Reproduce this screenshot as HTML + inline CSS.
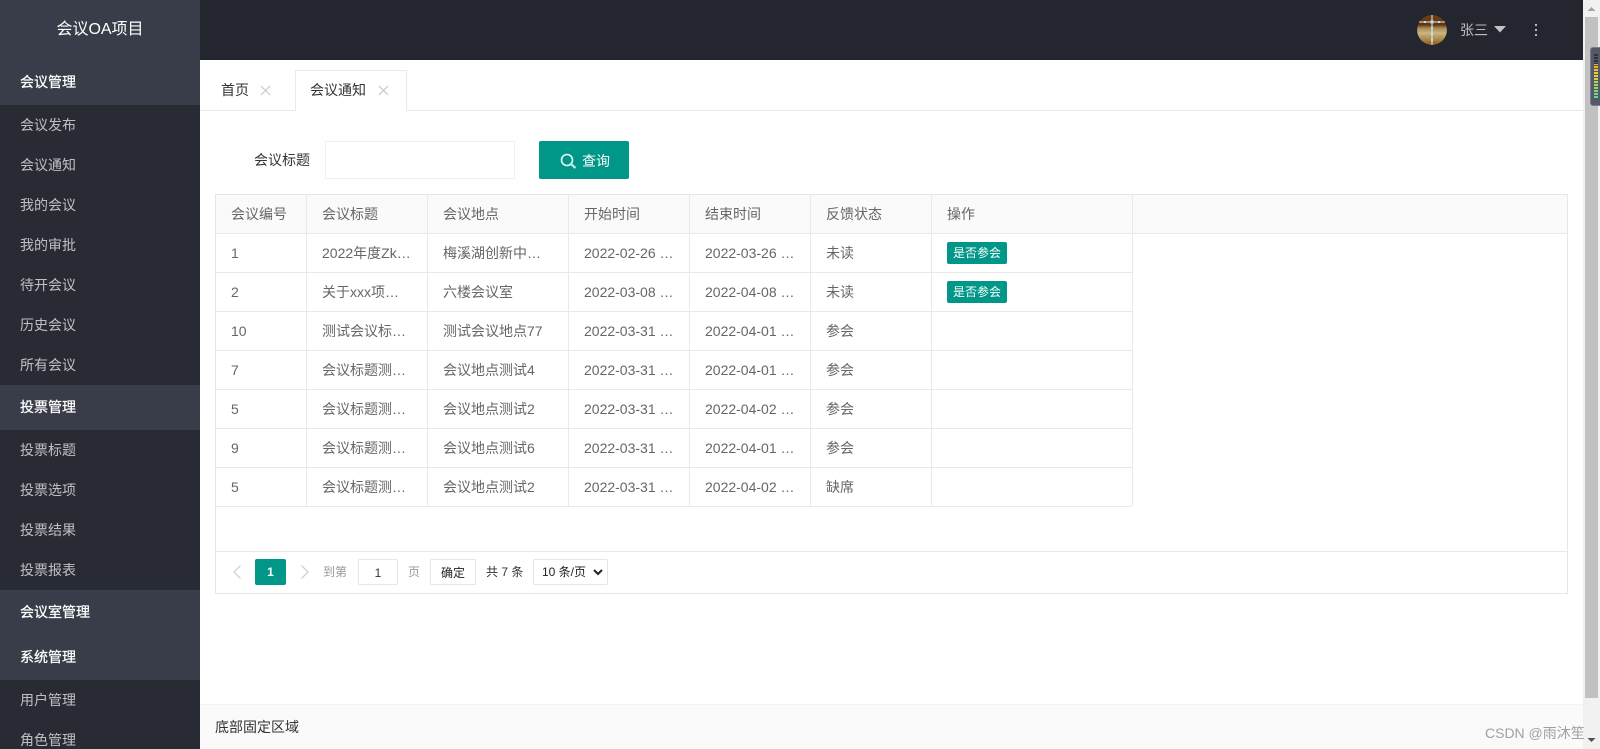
<!DOCTYPE html>
<html lang="zh"><head><meta charset="utf-8"><title>会议OA项目</title>
<style>
*{box-sizing:border-box}
html,body{margin:0;padding:0;width:1600px;height:749px;overflow:hidden;background:#fff;font-family:"Liberation Sans","Noto Sans CJK SC",sans-serif;font-size:14px;color:#333}
.a{position:absolute;white-space:nowrap}
#side{left:0;top:0;width:200px;height:749px;background:#282b33;overflow:hidden}
#side div{position:absolute;left:0;width:200px;padding-left:20px;line-height:40px;height:40px;color:rgba(255,255,255,.7)}
#side div.h{background:#393d49;height:45px;line-height:44px;color:#fff;-webkit-text-stroke:.25px #fff}
#side div.logo{background:#393d49;height:60px;line-height:59px;padding:0;text-align:center;font-size:16px;color:#fff}
#top{left:200px;top:0;width:1383px;height:60px;background:#23262e}
.tb{position:absolute;left:215px;top:194px;width:1353px;height:400px;border:1px solid #e6e6e6}
.l{position:absolute;background:#e9e9e9}
.c{position:absolute;color:#666;line-height:38px;white-space:nowrap;overflow:hidden;text-overflow:ellipsis}
.tag{position:absolute;left:947px;width:60px;height:22px;background:#009688;color:#fff;font-size:12px;line-height:22px;text-align:center;border-radius:2px}
.pg{position:absolute;top:559px;height:26px;line-height:26px;font-size:12px;white-space:nowrap}
.bx{border:1px solid #e6e6e6;border-radius:2px;text-align:center;background:#fff}
</style></head><body>
<div id="side" class="a">
<div class="logo" style="top:0">会议OA项目</div>
<div class="h" style="top:60px">会议管理</div>
<div style="top:105px">会议发布</div><div style="top:145px">会议通知</div><div style="top:185px">我的会议</div><div style="top:225px">我的审批</div><div style="top:265px">待开会议</div><div style="top:305px">历史会议</div><div style="top:345px">所有会议</div>
<div class="h" style="top:385px">投票管理</div>
<div style="top:430px">投票标题</div><div style="top:470px">投票选项</div><div style="top:510px">投票结果</div><div style="top:550px">投票报表</div>
<div class="h" style="top:590px">会议室管理</div>
<div class="h" style="top:635px">系统管理</div>
<div style="top:680px">用户管理</div><div style="top:720px">角色管理</div>
</div>
<div id="top" class="a"></div>
<svg class="a" style="left:1417px;top:15px" width="30" height="30" viewBox="0 0 30 30"><defs><clipPath id="av"><circle cx="15" cy="15" r="15"/></clipPath><linearGradient id="ag" x1="0" y1="0" x2="0" y2="1"><stop offset="0" stop-color="#6e4016"/><stop offset=".32" stop-color="#5e3410"/><stop offset=".44" stop-color="#a88a58"/><stop offset=".6" stop-color="#c9b684"/><stop offset=".8" stop-color="#b08a4a"/><stop offset="1" stop-color="#8a5a1e"/></linearGradient></defs><circle cx="15" cy="15" r="15" fill="url(#ag)" clip-path="url(#av)"/><path d="M15 0V30M2 7H28" stroke="#e8f0f0" stroke-width="1" fill="none"/><g fill="#b8e4ee"><rect x="13.500" y="5.500" width="3" height="3"/><rect x="7" y="6" width="2" height="2"/><rect x="21" y="6" width="2" height="2"/><rect x="14" y="12" width="2" height="2"/><rect x="14" y="18" width="2" height="2"/><rect x="14" y="24" width="2" height="2"/></g></svg>
<div class="a" style="left:1460px;top:20px;line-height:20px;color:rgba(255,255,255,.7)">张三</div>
<svg class="a" style="left:1494px;top:26px" width="12" height="7"><path d="M0 0H12L6 6.500Z" fill="#c2c2c2"/></svg>
<svg class="a" style="left:1534px;top:23px" width="4" height="14"><g fill="#b4b8c8"><rect x="1" y="1" width="2" height="2"/><rect x="1" y="6" width="2" height="2"/><rect x="1" y="11" width="2" height="2"/></g></svg>

<div class="l" style="left:200px;top:110px;width:1383px;height:1px"></div>
<div class="a" style="left:221px;top:80px;line-height:20px;color:#333">首页</div>
<svg class="a" style="left:260px;top:85px" width="11" height="11"><path d="M1 1L10 10M10 1L1 10" stroke="#c8c8c8" stroke-width="1.200"/></svg>
<div class="a" style="left:295px;top:70px;width:112px;height:41px;background:#fff;border:1px solid #e9e9e9;border-bottom:0"></div>
<div class="a" style="left:310px;top:80px;line-height:20px;color:#333">会议通知</div>
<svg class="a" style="left:378px;top:85px" width="11" height="11"><path d="M1 1L10 10M10 1L1 10" stroke="#c8c8c8" stroke-width="1.200"/></svg>

<div class="a" style="left:254px;top:150px;line-height:20px;color:#333">会议标题</div>
<div class="a" style="left:325px;top:141px;width:190px;height:38px;border:1px solid #eee;border-radius:2px"></div>
<div class="a" style="left:539px;top:141px;width:90px;height:38px;background:#009688;border-radius:2px"></div>
<svg class="a" style="left:560px;top:153px" width="17" height="17"><circle cx="7" cy="7" r="5.500" fill="none" stroke="#e8fbf8" stroke-width="1.600"/><path d="M11 11L15.500 15" stroke="#bfe8e2" stroke-width="2.200"/></svg>
<div class="a" style="left:582px;top:151px;line-height:20px;color:#fff">查询</div>

<div class="tb"></div>
<div class="a" style="left:216px;top:195px;width:1351px;height:38px;background:#fafafa"></div>
<div class="l" style="left:215px;top:233px;width:1353px;height:1px"></div>
<div class="l" style="left:215px;top:272px;width:917px;height:1px"></div>
<div class="l" style="left:215px;top:311px;width:917px;height:1px"></div>
<div class="l" style="left:215px;top:350px;width:917px;height:1px"></div>
<div class="l" style="left:215px;top:389px;width:917px;height:1px"></div>
<div class="l" style="left:215px;top:428px;width:917px;height:1px"></div>
<div class="l" style="left:215px;top:467px;width:917px;height:1px"></div>
<div class="l" style="left:215px;top:506px;width:917px;height:1px"></div>
<div class="l" style="left:215px;top:551px;width:1353px;height:1px"></div>
<div class="l" style="left:306px;top:194px;width:1px;height:312px"></div>
<div class="l" style="left:427px;top:194px;width:1px;height:312px"></div>
<div class="l" style="left:568px;top:194px;width:1px;height:312px"></div>
<div class="l" style="left:689px;top:194px;width:1px;height:312px"></div>
<div class="l" style="left:810px;top:194px;width:1px;height:312px"></div>
<div class="l" style="left:931px;top:194px;width:1px;height:312px"></div>
<div class="l" style="left:1132px;top:194px;width:1px;height:312px"></div>

<div class="c" style="left:231px;top:195px">会议编号</div><div class="c" style="left:322px;top:195px">会议标题</div><div class="c" style="left:443px;top:195px">会议地点</div><div class="c" style="left:584px;top:195px">开始时间</div><div class="c" style="left:705px;top:195px">结束时间</div><div class="c" style="left:826px;top:195px">反馈状态</div><div class="c" style="left:947px;top:195px">操作</div>

<div class="c" style="left:231px;top:234px">1</div><div class="c" style="left:322px;top:234px;width:90px">2022年度Zking会议</div><div class="c" style="left:443px;top:234px;width:110px">梅溪湖创新中心会议室</div><div class="c" style="left:584px;top:234px;width:90px">2022-02-26 10:00:00</div><div class="c" style="left:705px;top:234px;width:90px">2022-03-26 10:00:00</div><div class="c" style="left:826px;top:234px">未读</div>
<div class="tag" style="top:242px">是否参会</div>

<div class="c" style="left:231px;top:273px">2</div><div class="c" style="left:322px;top:273px;width:90px">关于xxx项目的会议</div><div class="c" style="left:443px;top:273px;width:110px">六楼会议室</div><div class="c" style="left:584px;top:273px;width:90px">2022-03-08 10:00:00</div><div class="c" style="left:705px;top:273px;width:90px">2022-04-08 10:00:00</div><div class="c" style="left:826px;top:273px">未读</div>
<div class="tag" style="top:281px">是否参会</div>

<div class="c" style="left:231px;top:312px">10</div><div class="c" style="left:322px;top:312px;width:90px">测试会议标题77</div><div class="c" style="left:443px;top:312px;width:110px">测试会议地点77</div><div class="c" style="left:584px;top:312px;width:90px">2022-03-31 10:00:00</div><div class="c" style="left:705px;top:312px;width:90px">2022-04-01 10:00:00</div><div class="c" style="left:826px;top:312px">参会</div>

<div class="c" style="left:231px;top:351px">7</div><div class="c" style="left:322px;top:351px;width:90px">会议标题测试4</div><div class="c" style="left:443px;top:351px;width:110px">会议地点测试4</div><div class="c" style="left:584px;top:351px;width:90px">2022-03-31 10:00:00</div><div class="c" style="left:705px;top:351px;width:90px">2022-04-01 10:00:00</div><div class="c" style="left:826px;top:351px">参会</div>

<div class="c" style="left:231px;top:390px">5</div><div class="c" style="left:322px;top:390px;width:90px">会议标题测试2</div><div class="c" style="left:443px;top:390px;width:110px">会议地点测试2</div><div class="c" style="left:584px;top:390px;width:90px">2022-03-31 10:00:00</div><div class="c" style="left:705px;top:390px;width:90px">2022-04-02 10:00:00</div><div class="c" style="left:826px;top:390px">参会</div>

<div class="c" style="left:231px;top:429px">9</div><div class="c" style="left:322px;top:429px;width:90px">会议标题测试6</div><div class="c" style="left:443px;top:429px;width:110px">会议地点测试6</div><div class="c" style="left:584px;top:429px;width:90px">2022-03-31 10:00:00</div><div class="c" style="left:705px;top:429px;width:90px">2022-04-01 10:00:00</div><div class="c" style="left:826px;top:429px">参会</div>

<div class="c" style="left:231px;top:468px">5</div><div class="c" style="left:322px;top:468px;width:90px">会议标题测试2</div><div class="c" style="left:443px;top:468px;width:110px">会议地点测试2</div><div class="c" style="left:584px;top:468px;width:90px">2022-03-31 10:00:00</div><div class="c" style="left:705px;top:468px;width:90px">2022-04-02 10:00:00</div><div class="c" style="left:826px;top:468px">缺席</div>

<svg class="a" style="left:231px;top:564px" width="12" height="16"><path d="M9.500 1.500L3 8L9.500 14.500" fill="none" stroke="#d2d2d2" stroke-width="1.300"/></svg>
<div class="pg" style="left:255px;width:31px;background:#009688;color:#fff;text-align:center;border-radius:2px;font-weight:bold">1</div>
<svg class="a" style="left:299px;top:564px" width="12" height="16"><path d="M2.500 1.500L9 8L2.500 14.500" fill="none" stroke="#d2d2d2" stroke-width="1.300"/></svg>
<div class="pg" style="left:323px;color:#999">到第</div>
<div class="pg bx" style="left:358px;width:40px;color:#333">1</div>
<div class="pg" style="left:408px;color:#999">页</div>
<div class="pg bx" style="left:430px;width:46px;color:#222">确定</div>
<div class="pg" style="left:486px;color:#333">共 7 条</div>
<div class="pg bx" style="left:533px;width:75px;color:#222;text-align:left;padding-left:8px;line-height:24px">10 条/页</div>
<svg class="a" style="left:593px;top:569px" width="10" height="7"><path d="M1 1L5 5L9 1" fill="none" stroke="#222" stroke-width="2"/></svg>

<div class="a" style="left:200px;top:704px;width:1383px;height:45px;background:#fafafa;border-top:1px solid #f4f4f4"></div>
<div class="a" style="left:215px;top:717px;line-height:20px;color:#333">底部固定区域</div>

<div class="a" style="left:1583px;top:0;width:17px;height:749px;background:#f1f1f1"></div>
<div class="a" style="left:1585px;top:17px;width:13px;height:681px;background:#c1c1c1"></div>
<svg class="a" style="left:1583px;top:0" width="17" height="17"><path d="M4.500 11H12.500L8.500 7Z" fill="#a3a3a3"/></svg>
<svg class="a" style="left:1583px;top:732px" width="17" height="17"><path d="M4.500 6H12.500L8.500 10Z" fill="#505050"/></svg>
<div class="a" style="left:1590px;top:47px;width:10px;height:59px;background:#555966;border:1px solid #7a7e8c;border-right:0;border-radius:3px 0 0 3px"></div>
<div class="a" style="left:1594px;top:54px;width:4px;height:45px;background:repeating-linear-gradient(to bottom,rgba(0,0,0,0) 0,rgba(0,0,0,0) 2px,#555966 2px,#555966 3px),linear-gradient(to bottom,#30323a 0,#30323a 10px,#f0a030 10px,#e8d040 20px,#a8d850 30px,#40e0b0 45px)"></div>
<div class="a" style="left:1485px;top:723px;line-height:20px;color:#a0a0a0;font-size:14px">CSDN @雨沐笙</div>
</body></html>
